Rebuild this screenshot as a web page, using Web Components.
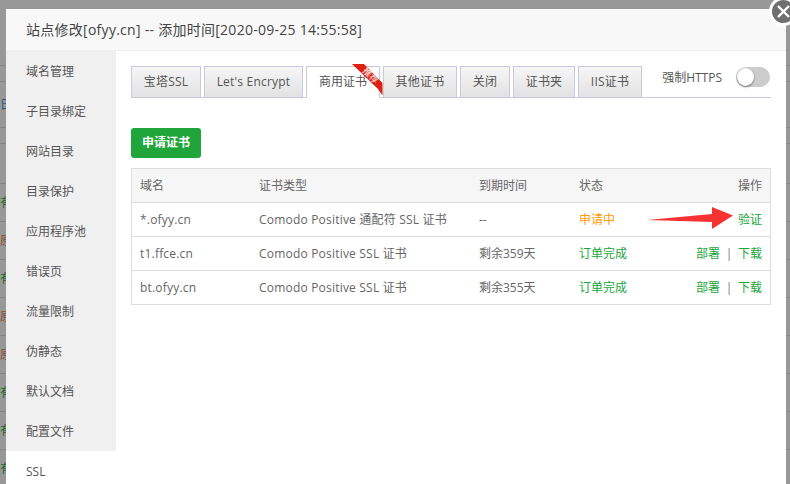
<!DOCTYPE html>
<html lang="zh">
<head>
<meta charset="utf-8">
<style>
  html, body { margin: 0; height: 100%; overflow: hidden; }
  body { font-family: "Open Sans", "Noto Sans CJK SC", sans-serif; font-size: 12px; color: #555; }
</style>
</head>
<body>
<site-dialog heading="站点修改[ofyy.cn] -- 添加时间[2020-09-25 14:55:58]">
  <side-menu slot="menu" active="SSL" items="域名管理,子目录绑定,网站目录,目录保护,应用程序池,错误页,流量限制,伪静态,默认文档,配置文件,SSL"></side-menu>
  <tab-bar></tab-bar>
  <cert-table></cert-table>
</site-dialog>

<script>
class SiteDialog extends HTMLElement {
  constructor() {
    super();
    this.attachShadow({ mode: 'open' });
  }

  connectedCallback() {
    const heading = this.getAttribute('heading') || '';
    // bits of the page behind the overlay, cut off by the dialog
    const behind = [
      [66, '', ''], [16, '', ''], [46, '日', '#2a5a8a'], [16, '', ''], [40, '', ''],
      [38, '有', '#1c6b2c'], [38, '原', '#8a4a3a'], [38, '有', '#1c6b2c'], [38, '原', '#8a4a3a'],
      [38, '原', '#8a4a3a'], [38, '有', '#1c6b2c'], [38, '有', '#1c6b2c'], [38, '有', '#1c6b2c']
    ];
    this.shadowRoot.innerHTML = `
      <style>
        :host {
          display: block;
          position: relative;
          width: 790px;
          height: 484px;
          overflow: hidden;
          background: #989898;
          padding: 9px 0 0 6px;
          box-sizing: border-box;
        }
        .rows {
          position: absolute;
          left: 0;
          right: 0;
          top: 0;
        }
        .rows div {
          box-sizing: border-box;
          border-bottom: 1px solid #858585;
          overflow: hidden;
          white-space: nowrap;
        }
        .box {
          position: relative;
          width: 780px;
          height: 475px;
          background: #fff;
          display: flex;
          flex-direction: column;
        }
        .title {
          height: 42px;
          flex: none;
          box-sizing: border-box;
          background: #f8f8f8;
          border-bottom: 1px solid #eee;
          padding-left: 20px;
          font-size: 14px;
          letter-spacing: .27px;
          line-height: 41px;
          color: #444;
        }
        .body { flex: 1; display: flex; min-height: 0; }
        .main { flex: 1; padding: 15px 0 0 15px; }
        .close {
          position: absolute;
          left: 769px;
          top: -3px;
          width: 29px;
          height: 29px;
          box-sizing: border-box;
          border-radius: 50%;
          background: #6f6f6f;
          border: 3px solid #fff;
        }
        .close svg { display: block; margin: 3px 0 0 3px; }
      </style>
      <div class="rows">
        ${behind.map(([h, t, c]) => `<div style="height:${h}px;line-height:${h}px;color:${c || 'inherit'}">${t}</div>`).join('')}
      </div>
      <div class="box">
        <div class="title">${heading}</div>
        <div class="body">
          <slot name="menu"></slot>
          <div class="main"><slot></slot></div>
        </div>
      </div>
      <div class="close">
        <svg width="17" height="17" viewBox="0 0 17 17"><path d="M3 3 L14 14 M14 3 L3 14" stroke="#fff" stroke-width="2.4" fill="none"/></svg>
      </div>
    `;
  }
}

class SideMenu extends HTMLElement {
  constructor() {
    super();
    this.attachShadow({ mode: 'open' });
  }

  connectedCallback() {
    const active = this.getAttribute('active');
    const items = (this.getAttribute('items') || '').split(',');
    this.shadowRoot.innerHTML = `
      <style>
        :host {
          display: block;
          flex: none;
          width: 110px;
          background: #fff;
        }
        div {
          height: 40px;
          line-height: 41px;
          padding-left: 20px;
          background: #f0f0f0;
          color: #555;
        }
        div.on { background: #fff; }
      </style>
      ${items.map(t => `<div class="${t === active ? 'on' : ''}">${t}</div>`).join('')}
    `;
  }
}

class TabBar extends HTMLElement {
  constructor() {
    super();
    this.attachShadow({ mode: 'open' });
  }

  connectedCallback() {
    const tabs = [
      ['宝塔SSL', 70], ["Let's Encrypt", 99], ['商用证书', 74], ['其他证书', 74],
      ['关闭', 50], ['证书夹', 62], ['IIS证书', 64]
    ];
    this.shadowRoot.innerHTML = `
      <style>
        :host {
          display: flex;
          gap: 3px;
          width: 640px;
          height: 32px;
          box-sizing: border-box;
          border-bottom: 1px solid #ccc9dc;
          position: relative;
        }
        .tab {
          box-sizing: border-box;
          height: 31px;
          border: 1px solid #ccc9dc;
          border-bottom: 0;
          background: linear-gradient(#f6f6f6, #e2e2e2);
          text-align: center;
          line-height: 30px;
          letter-spacing: .2px;
          color: #555;
        }
        .tab.on {
          background: #fff;
          height: 32px;
          position: relative;
          letter-spacing: 0;
        }
        .ribbon { position: absolute; left: 45px; top: -3px; }
        .badge {
          position: absolute;
          left: 52px;
          top: 3px;
          width: 24px;
          font-size: 10px;
          line-height: 10px;
          color: #fff;
          white-space: nowrap;
          transform: rotate(45deg) scale(.9);
        }
        .force {
          position: absolute;
          right: 1px;
          top: 1px;
          display: flex;
          align-items: center;
          gap: 14px;
          height: 20px;
          color: #555;
        }
        .switch {
          width: 34px;
          height: 20px;
          border-radius: 10px;
          background: #ccc;
          position: relative;
        }
        .switch::after {
          content: "";
          position: absolute;
          left: 1px;
          top: 1px;
          width: 17px;
          height: 18px;
          border-radius: 50%;
          background: #fff;
          box-shadow: 0 1px 2px rgba(0, 0, 0, .5);
        }
      </style>
      ${tabs.map(([t, w], i) => `<div class="tab${i === 2 ? ' on' : ''}" style="width:${w}px">${t}${i === 2 ? `
        <svg class="ribbon" width="31" height="32" viewBox="0 0 31 32"><path d="M0 0 H12 L30.500 19 V31.500 L26 25 Z" fill="#dd2110"/></svg>
        <span class="badge">推荐</span>` : ''}</div>`).join('')}
      <div class="force">强制HTTPS<span class="switch"></span></div>
    `;
  }
}

class CertTable extends HTMLElement {
  constructor() {
    super();
    this.attachShadow({ mode: 'open' });
  }

  connectedCallback() {
    const both = '<a>部署</a><i>|</i><a>下载</a>';
    const rows = [
      ['*.ofyy.cn', 'Comodo Positive 通配符 SSL 证书', '--', '申请中', 'wait', '<a>验证</a>'],
      ['t1.ffce.cn', 'Comodo Positive SSL 证书', '剩余359天', '订单完成', 'ok', both],
      ['bt.ofyy.cn', 'Comodo Positive SSL 证书', '剩余355天', '订单完成', 'ok', both]
    ];
    this.shadowRoot.innerHTML = `
      <style>
        :host { display: block; position: relative; padding-top: 30px; color: #666; }
        .apply {
          width: 70px;
          height: 30px;
          border-radius: 3px;
          background: #20a53a;
          color: #fff;
          font-weight: 700;
          text-align: center;
          line-height: 30px;
          margin-bottom: 10px;
        }
        .grid {
          width: 640px;
          box-sizing: border-box;
          border: 1px solid #ddd;
        }
        .row {
          display: grid;
          grid-template-columns: 119px 220px 100px 1fr 100px;
          height: 34px;
          box-sizing: border-box;
          line-height: 33px;
          border-top: 1px solid #ddd;
          padding: 0 8px;
        }
        .row.head { background: #f6f6f6; border-top: 0; height: 33px; }
        .row > :last-child { text-align: right; }
        .latin { letter-spacing: .2px; }
        .wait { color: #ff9900; }
        .ok, a { color: #20a53a; }
        i { font-style: normal; color: #777; margin: 0 5.700px; }
        .arrow { position: absolute; left: 516px; top: 109px; }
      </style>
      <div class="apply">申请证书</div>
      <div class="grid">
        <div class="row head"><span>域名</span><span>证书类型</span><span>到期时间</span><span>状态</span><span>操作</span></div>
        ${rows.map(r => `<div class="row"><span class="latin">${r[0]}</span><span class="latin">${r[1]}</span><span>${r[2]}</span><span class="${r[4]}">${r[3]}</span><span>${r[5]}</span></div>`).join('')}
      </div>
      <svg class="arrow" width="90" height="24" viewBox="0 0 90 24"><path d="M0 13 L65 7 L65 0 L86 8.500 L65 22 L65 15 Z" fill="#f73232"/></svg>
    `;
  }
}

customElements.define('site-dialog', SiteDialog);
customElements.define('side-menu', SideMenu);
customElements.define('tab-bar', TabBar);
customElements.define('cert-table', CertTable);
</script>
</body>
</html>
